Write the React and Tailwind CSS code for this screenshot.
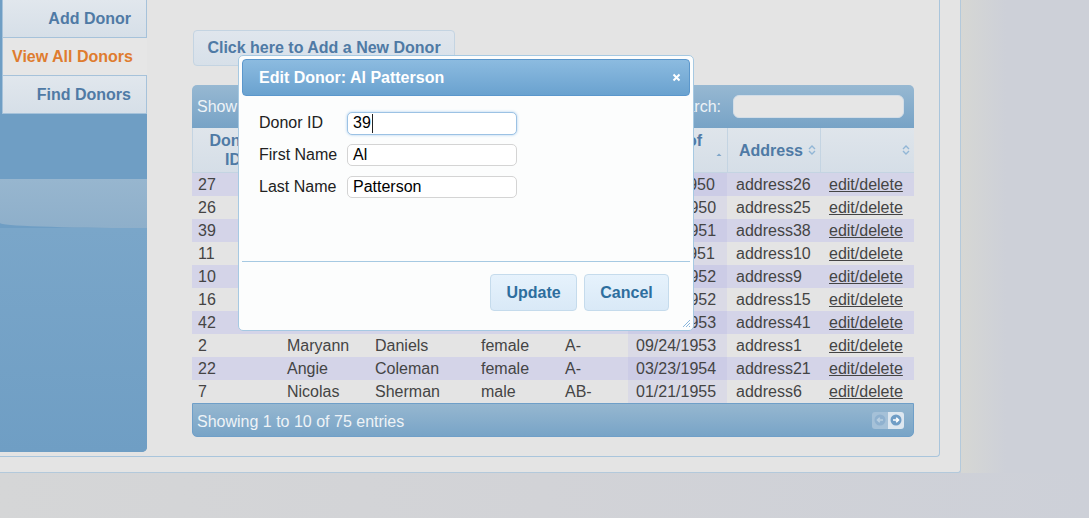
import React from "react";

const rows = [
  ["27", "Walter", "Hughes", "male", "O+", "02/11/1950", "address26"],
  ["26", "Gloria", "Bryant", "female", "B+", "08/30/1950", "address25"],
  ["39", "Al", "Patterson", "male", "A+", "04/17/1951", "address38"],
  ["11", "Lena", "Murray", "female", "O-", "11/05/1951", "address10"],
  ["10", "Ruben", "Fields", "male", "B-", "03/14/1952", "address9"],
  ["16", "Doris", "Wheeler", "female", "AB+", "09/02/1952", "address15"],
  ["42", "Kirk", "Mendoza", "male", "O+", "05/28/1953", "address41"],
  ["2", "Maryann", "Daniels", "female", "A-", "09/24/1953", "address1"],
  ["22", "Angie", "Coleman", "female", "A-", "03/23/1954", "address21"],
  ["7", "Nicolas", "Sherman", "male", "AB-", "01/21/1955", "address6"],
];

const cols = [
  "w-[87px] pl-[6px]",
  "w-[88px] pl-[8px]",
  "w-[106px] pl-[8px]",
  "w-[84px] pl-[8px]",
  "w-[71px] pl-[8px]",
  "w-[99px] pl-[8px]",
  "w-[93px] pl-[9px]",
  "w-[94px] pl-[9px]",
];

const headers = [
  ["Donor", "ID"],
  ["First", "Name"],
  ["Last", "Name"],
  ["Gender"],
  ["Blood", "Type"],
  ["Date of", "Birth"],
  ["Address"],
  [""],
];

function SortBoth() {
  return (
    <svg width="8" height="12" viewBox="0 0 8 12" className="shrink-0">
      <path d="M1 5 L4 2 L7 5" fill="none" stroke="#92b6d6" strokeWidth="1.4" />
      <path d="M1 7 L4 10 L7 7" fill="none" stroke="#92b6d6" strokeWidth="1.4" />
    </svg>
  );
}

function SortUp() {
  return (
    <svg width="8" height="12" viewBox="0 0 8 12" className="shrink-0">
      <path d="M1.5 9 L4 6.5 L6.5 9 Z" fill="#7fa6c9" />
    </svg>
  );
}

function NavItem({ label, active }) {
  if (active) {
    return (
      <div className="h-[38px] ml-[2px] flex items-center pl-[9px] bg-[#e6e6e6] border-l border-b border-[#a6c2da] text-[#df7c2f] font-bold text-[16px]">
        {label}
      </div>
    );
  }
  return (
    <div className="h-[38px] ml-[2px] w-[145px] flex items-center justify-end pr-[15px] bg-gradient-to-b from-[#e1e7ed] to-[#d6dfe8] border-l border-r border-b border-[#a6c2da] text-[#4f7aa5] font-bold text-[16px]">
      {label}
    </div>
  );
}

function Field({ label, value, focused }) {
  return (
    <div className="flex items-center h-[22px]">
      <div className="w-[88px] text-[16px] text-[#222]">{label}</div>
      <div
        className={
          focused
            ? "w-[170px] h-[23px] flex items-center px-[5px] rounded-[5px] bg-white border border-[#9cc2e4] shadow-[0_0_3px_#a9cdee] text-[16px] text-black"
            : "w-[170px] h-[22px] flex items-center px-[5px] rounded-[5px] bg-white border border-[#d4d4d4] text-[16px] text-black"
        }
      >
        {value}
        {focused && <span className="inline-block w-[1px] h-[19px] bg-[#222] ml-[1px]" />}
      </div>
    </div>
  );
}

export default function App() {
  return (
    <div className="relative w-[1089px] h-[518px] overflow-hidden bg-[#cdd0d8] font-['Liberation_Sans',Arial,sans-serif]">
      <div className="flex">
        <div className="w-[961px] h-[473px] bg-[#e4e4e4] border-r border-b border-[#b3c9db] rounded-br-[3px]">
          <div className="w-[940px] h-[457px] border-r border-b border-[#a9c5dc] rounded-br-[4px] flex">
            {/* sidebar */}
            <div className="w-[147px] h-[452px] flex flex-col bg-[#6f9ec4] rounded-br-[5px] overflow-hidden shrink-0">
              <NavItem label="Add Donor" />
              <NavItem label="View All Donors" active />
              <NavItem label="Find Donors" />
              <div className="h-[65px] bg-[#6f9ec4]" />
              <div className="h-[49px] bg-gradient-to-b from-[#97b6cf] to-[#8eafca] rounded-bl-[140px_5px]" />
              <div className="flex-1 bg-gradient-to-b from-[#7aa6c9] to-[#6f9ec4]" />
            </div>

            {/* content */}
            <div className="pl-[45px] pt-[30px] flex flex-col">
              <div className="ml-[1px] w-[262px] h-[36px] flex items-center justify-center rounded-[4px] border border-[#c4d4e2] bg-gradient-to-b from-[#e0e6ed] to-[#d7e0e9] text-[#4f7aa5] font-bold text-[16px]">
                Click here to Add a New Donor
              </div>

              <div className="mt-[19px] w-[722px]">
                <div className="h-[43px] rounded-t-[5px] bg-gradient-to-b from-[#97b8d2] to-[#77a3c6] flex items-center justify-between pl-[5px] pr-[10px]">
                  <div className="text-[16px] text-[#eef3f7]">Show 10 entries</div>
                  <div className="flex items-center gap-[12px]">
                    <span className="text-[16px] text-[#eef3f7]">Search:</span>
                    <div className="w-[171px] h-[23px] rounded-[6px] bg-[#e6e6e6] border border-[#d2dde7]" />
                  </div>
                </div>

                <div className="flex h-[45px] bg-gradient-to-b from-[#dfe5eb] to-[#d5dee7] border-b border-[#c4d4e2]">
                  {headers.map((h, i) => (
                    <div
                      key={i}
                      className={
                        cols[i].split(" ")[0] +
                        " shrink-0 h-full flex items-center justify-between pl-[6px] pr-[4px] border-l border-[#c4d4e2] text-[#4f7aa5] font-bold text-[16px] leading-[19px]"
                      }
                    >
                      <div className="flex-1 text-center">
                        {h.map((line, j) => (
                          <div key={j}>{line}</div>
                        ))}
                      </div>
                      <div className={i === 5 ? "self-end mb-[13px]" : ""}>
                        {i === 5 ? <SortUp /> : <SortBoth />}
                      </div>
                    </div>
                  ))}
                </div>

                {rows.map((r, ri) => {
                  const odd = ri % 2 === 0;
                  return (
                    <div key={ri} className={odd ? "flex h-[23px] bg-[#d4d4e8]" : "flex h-[23px] bg-[#e4e4e4]"}>
                      {[...r, "edit/delete"].map((c, ci) => (
                        <div
                          key={ci}
                          className={
                            cols[ci] +
                            " shrink-0 h-full flex items-center pt-[1px] text-[16px] text-[#444] " +
                            (ci === 5 ? (odd ? "bg-[#cccce6]" : "bg-[#dadae6]") : "") +
                            (ci === 7 ? " underline text-[#333]" : "")
                          }
                        >
                          {c}
                        </div>
                      ))}
                    </div>
                  );
                })}

                <div className="h-[34px] rounded-b-[5px] border border-[#6f9fc8] bg-gradient-to-b from-[#96b7d0] to-[#78a4c7] flex items-center justify-between pl-[4px] pr-[9px]">
                  <span className="text-[16px] text-[#eef3f7] pt-[3px]">Showing 1 to 10 of 75 entries</span>
                  <div className="flex rounded-[3px] overflow-hidden">
                    <div className="w-[16px] h-[17px] bg-[#a5c1d8] flex items-center justify-center">
                      <svg width="12" height="12" viewBox="0 0 12 12">
                        <circle cx="6" cy="6" r="5.5" fill="#8fb1cf" />
                        <path d="M9 6 H3.5 M5.8 3.7 L3.5 6 L5.8 8.3" stroke="#b9cfe1" strokeWidth="1.6" fill="none" />
                      </svg>
                    </div>
                    <div className="w-[16px] h-[17px] bg-[#dde7f0] flex items-center justify-center">
                      <svg width="12" height="12" viewBox="0 0 12 12">
                        <circle cx="6" cy="6" r="5.5" fill="#6f9dc6" />
                        <path d="M3 6 H8.5 M6.2 3.7 L8.5 6 L6.2 8.3" stroke="#ffffff" strokeWidth="1.6" fill="none" />
                      </svg>
                    </div>
                  </div>
                </div>
              </div>
            </div>
          </div>
        </div>
        <div className="w-[45px] h-[473px] bg-gradient-to-r from-[#d6d7d4] to-[#cdd0d8]" />
      </div>
      <div className="w-full h-[45px] bg-gradient-to-r from-[#d5d6d7] via-[#d2d3d7] to-[#cdd0d8]" />

      {/* dialog */}
      <div className="absolute left-[238px] top-[55px] w-[456px] h-[276px] border border-[#a6c9e2] rounded-[5px] bg-[#fcfdfd] p-[3px] flex flex-col">
        <div className="h-[37px] shrink-0 rounded-[4px] border border-[#5b97cc] bg-gradient-to-b from-[#8cbbe0] to-[#6aa2cf] flex items-center justify-between pl-[16px] pr-[8px]">
          <span className="text-white font-bold text-[16px]">Edit Donor: Al Patterson</span>
          <svg width="9" height="9" viewBox="0 0 9 9">
            <path d="M1.5 1.5 L7.5 7.5 M7.5 1.5 L1.5 7.5" stroke="#ffffff" strokeWidth="2" />
          </svg>
        </div>
        <div className="h-[165px] shrink-0 pt-[16px] px-[17px] flex flex-col gap-[10px]">
          <Field label="Donor ID" value="39" focused />
          <Field label="First Name" value="Al" />
          <Field label="Last Name" value="Patterson" />
        </div>
        <div className="h-px bg-[#a6c9e2] shrink-0" />
        <div className="flex justify-end gap-[7px] pt-[12px] pr-[21px]">
          <div className="w-[87px] h-[37px] flex items-center justify-center rounded-[4px] border border-[#c5dbec] bg-gradient-to-b from-[#e6f2fc] to-[#d9e9f7] text-[#2e6e9e] font-bold text-[16px]">
            Update
          </div>
          <div className="w-[85px] h-[37px] flex items-center justify-center rounded-[4px] border border-[#c5dbec] bg-gradient-to-b from-[#e6f2fc] to-[#d9e9f7] text-[#2e6e9e] font-bold text-[16px]">
            Cancel
          </div>
        </div>
        <svg width="10" height="10" viewBox="0 0 10 10" className="absolute right-[2px] bottom-[2px]">
          <path d="M9 2 L2 9 M9 5 L5 9 M9 8 L8 9" stroke="#8ab6dc" strokeWidth="1" />
        </svg>
      </div>
    </div>
  );
}
